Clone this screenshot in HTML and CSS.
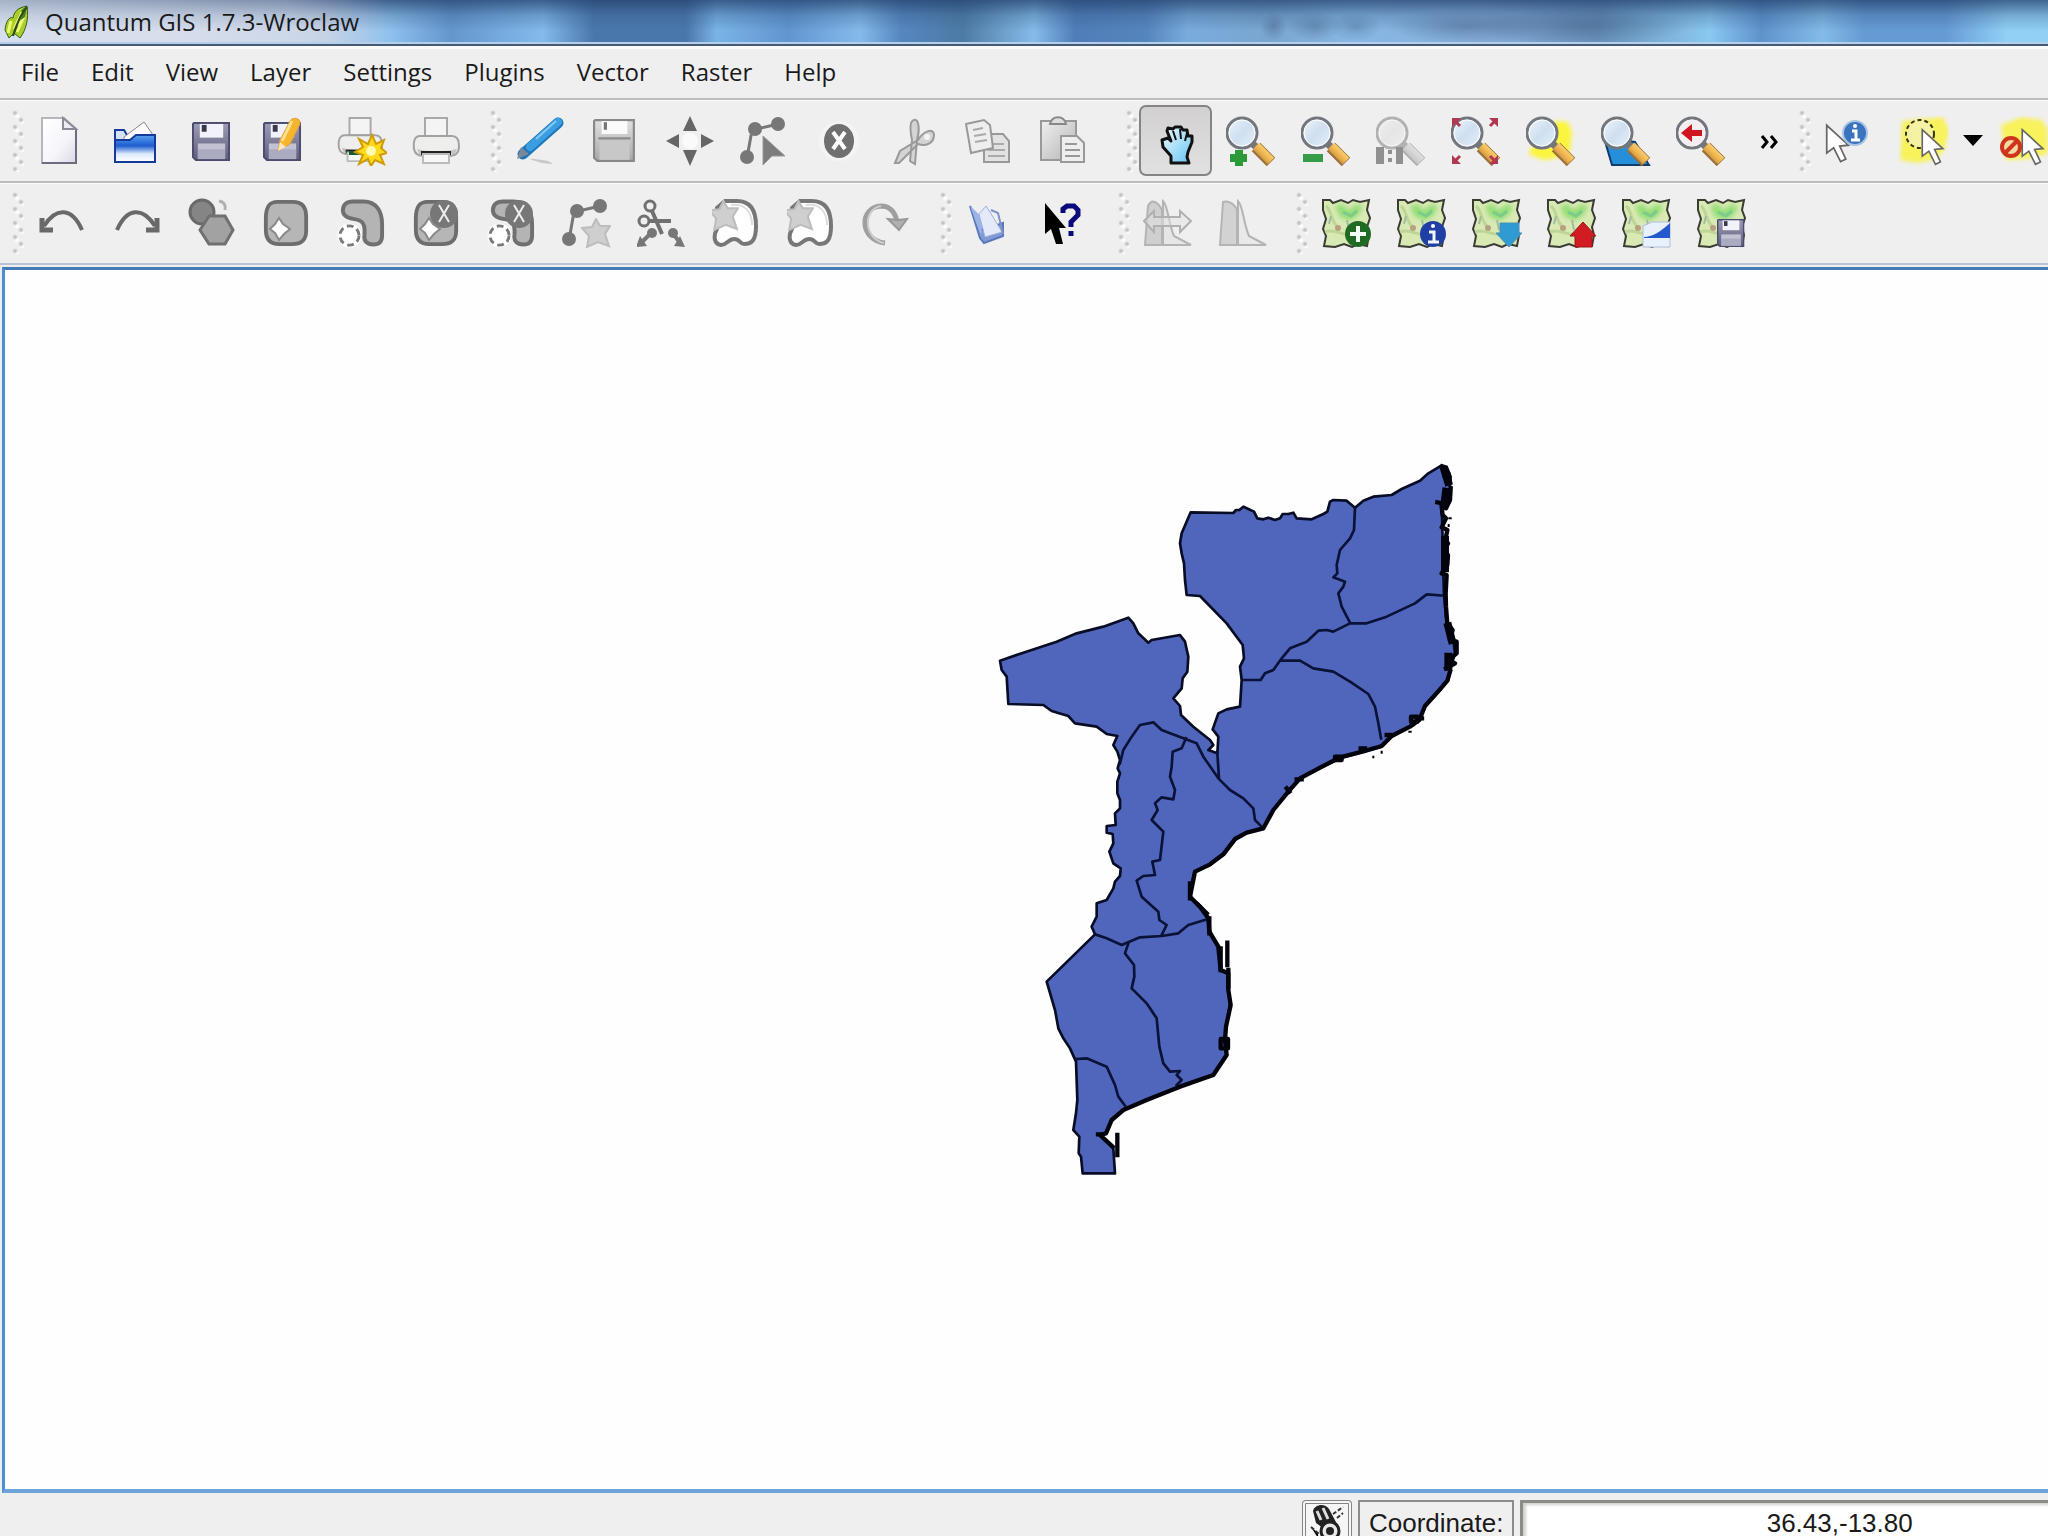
FILE: index.html
```html
<!DOCTYPE html>
<html lang="en">
<head>
<meta charset="utf-8">
<title>Quantum GIS 1.7.3-Wroclaw</title>
<link rel="stylesheet" href="styles.css">
</head>
<body>
<svg class="defs" aria-hidden="true">
  <defs>
    <linearGradient id="gPaper" x1="0" y1="0" x2="1" y2="1"><stop offset="0" stop-color="#fff"/><stop offset=".6" stop-color="#f6f5fb"/><stop offset="1" stop-color="#d9d9e6"/></linearGradient>
    <linearGradient id="gBlue" x1="0" y1="0" x2="0" y2="1"><stop offset="0" stop-color="#5aa2ee"/><stop offset=".4" stop-color="#1d5cd0"/><stop offset=".7" stop-color="#dcebfb"/><stop offset="1" stop-color="#fff"/></linearGradient>
    <linearGradient id="gDisk" x1="0" y1="0" x2="0" y2="1"><stop offset="0" stop-color="#9c9cb6"/><stop offset="1" stop-color="#5e5e7c"/></linearGradient>
    <linearGradient id="gDiskGrey" x1="0" y1="0" x2="0" y2="1"><stop offset="0" stop-color="#e0e0e0"/><stop offset="1" stop-color="#a8a8a8"/></linearGradient>
    <linearGradient id="gHandle" x1="1" y1="0" x2="0" y2="1"><stop offset="0" stop-color="#ffe9a0"/><stop offset=".5" stop-color="#f2b850"/><stop offset="1" stop-color="#a8743a"/></linearGradient>
    <linearGradient id="gLens" x1="0" y1="0" x2="1" y2="1"><stop offset="0" stop-color="#eef5fc"/><stop offset=".5" stop-color="#cfdff0"/><stop offset="1" stop-color="#e6f1fb"/></linearGradient>
    <linearGradient id="gHand" x1="0" y1="0" x2="1" y2="1"><stop offset="0" stop-color="#f2fbff"/><stop offset="1" stop-color="#62c4f4"/></linearGradient>
    <linearGradient id="gGrey" x1="0" y1="0" x2="1" y2="1"><stop offset="0" stop-color="#f0f0f0"/><stop offset="1" stop-color="#b4b4b4"/></linearGradient>
    <filter id="soft"><feGaussianBlur stdDeviation="2"/></filter>
    <symbol id="disk" viewBox="0 0 40 40">
      <path d="M2 1H38V39H4L1 36V2Z" fill="url(#gDisk)" stroke="#4c4c70" stroke-width="2"/>
      <path d="M8 2H32V16H8Z" fill="#f2f2fa"/><path d="M10 3H15V10H10Z" fill="#39394e"/>
      <path d="M6 22H34V38H6Z" fill="#c2c2d2"/><path d="M6 28H34V38H6Z" fill="#aaaac0"/>
    </symbol>
    <symbol id="diskGrey" viewBox="0 0 40 40">
      <path d="M2 1H38V39H4L1 36V2Z" fill="url(#gDiskGrey)" stroke="#888" stroke-width="2"/>
      <path d="M8 2H32V14H8Z" fill="#fbfbfb"/><path d="M10 3H13V10H10Z" fill="#777"/>
      <path d="M6 20H34V38H6Z" fill="#c8c8c8"/><path d="M5 18H35" stroke="#8c8c8c" stroke-width="2"/>
    </symbol>
    <symbol id="lens" viewBox="0 0 50 50">
      <path d="M26 27L31 32" stroke="#777" stroke-width="7"/>
      <path d="M30 31L45 46" stroke="#9b703a" stroke-width="12"/>
      <path d="M30 30L45 45" stroke="url(#gHandle)" stroke-width="9"/>
      <circle cx="16" cy="17" r="15" fill="url(#gLens)" stroke="#73767c" stroke-width="3"/>
      <circle cx="16" cy="17" r="13" fill="none" stroke="#fff" stroke-width="1"/>
    </symbol>
    <symbol id="printer" viewBox="0 0 50 50">
      <path d="M13 2H35V20H13Z" fill="#f4f4f4" stroke="#a8a8a8" stroke-width="2"/>
      <path d="M8 20C2 20 1 27 2 33C3 39 8 40 12 40H37C45 40 47 36 47 30C47 24 45 20 40 20Z" fill="#eeeeec" stroke="#a2a2a2" stroke-width="2"/>
      <path d="M5 33C15 36 34 36 45 33L43 38H7Z" fill="#c4c4c0"/>
      <path d="M9 37H39" stroke="#222" stroke-width="4"/>
      <path d="M11 38H37V47H11Z" fill="#f7f7f7" stroke="#bbb" stroke-width="2"/>
    </symbol>
    <symbol id="osm" viewBox="0 0 50 50">
      <path d="M2 2L9 2 12 5 20 2 27 5 32 2 39 4 48 2 46 12 49 20 46 29 48 37 46 48 37 46 31 49 23 46 14 49 3 48 5 38 2 31 5 21 2 12Z" fill="#d9e9b4" stroke="#3a3c34" stroke-width="2"/>
      <path d="M5 8C12 14 9 24 18 30M4 34C14 30 20 38 30 36" fill="none" stroke="#bdd596" stroke-width="3"/>
      <path d="M14 8L22 6 27 12 36 6 42 9 37 18 28 23 18 18Z" fill="#96de78" filter="url(#soft)"/>
      <path d="M22 14L30 18 36 13" fill="none" stroke="#7acb8c" stroke-width="3"/>
      <path d="M26 22L28 32M10 18L8 26" stroke="#a0bca4" stroke-width="2"/>
      <circle cx="17" cy="30" r="3" fill="#b9a083"/>
    </symbol>
    <symbol id="blob" viewBox="0 0 50 50">
      <path d="M16 3H32C42 3 46 9 46 18V33C46 43 41 47 31 47H18C8 47 4 41 4 32V20C4 9 7 3 16 3Z" fill="#b6b6b6" stroke="#6d6d6d" stroke-width="4"/>
    </symbol>
    <symbol id="bean" viewBox="0 0 50 50">
      <path d="M16 3H27C40 3 46 13 46 26V38C46 44 43 47 37 47C31 47 27 44 28 37C29 26 26 22 18 21C9 20 6 17 6 12C6 6 10 3 16 3Z" fill="#b4b4b4" stroke="#707070" stroke-width="4"/>
    </symbol>
    <symbol id="ring" viewBox="0 0 26 26">
      <circle cx="13" cy="13" r="10" fill="#fff" stroke="#fff" stroke-width="5"/>
      <circle cx="13" cy="13" r="10" fill="#fff" stroke="#7a7a7a" stroke-width="3" stroke-dasharray="7 4"/>
    </symbol>
    <symbol id="feature" viewBox="0 0 50 50">
      <path d="M7 42L12 14L38 8" fill="none" stroke="#777" stroke-width="3" stroke-dasharray="24 3"/>
      <circle cx="7" cy="41" r="7" fill="#777"/><circle cx="15" cy="13" r="7" fill="#777"/><circle cx="38" cy="8" r="7" fill="#777"/>
    </symbol>
    <symbol id="star" viewBox="0 0 30 30">
      <path d="M15 1L19 8 29 8 24 16 28 28 17 24 6 29 8 18 1 10 11 9Z" fill="#cfcfcf" stroke="#bdbdbd" stroke-width="2"/>
    </symbol>
    <symbol id="merge" viewBox="0 0 50 50">
      <path d="M14 3H26C40 3 45 13 45 28C45 42 41 46 33 46C29 46 29 41 23 41C17 41 16 47 10 47C3 46 2 38 6 31V10Z" fill="#fff" stroke="#777" stroke-width="4"/>
      <path d="M20 7C34 5 41 14 41 27" fill="none" stroke="#ddd" stroke-width="2"/>
      <use href="#star" x="-3" y="2" width="31" height="31"/>
    </symbol>
    <symbol id="arrow" viewBox="0 0 30 46">
      <path d="M2 2L2 34 10 28 18 44 24 41 17 26 27 25Z" fill="#fff" stroke="#666" stroke-width="2"/>
    </symbol>
  </defs>
</svg>

<header class="titlebar">
  <svg class="titlebar__icon" viewBox="0 0 26 34" aria-hidden="true">
    <path d="M23 1C12 3 10 8 9 13C5 11 2 17 1 25L5 33L10 28L16 33C22 25 25 14 23 1Z" fill="#a8cf2c" stroke="#3d5d1c" stroke-width="1"/>
    <path d="M23 1C14 6 13 14 10 28C16 24 22 14 23 1Z" fill="#4d7b25"/>
    <path d="M18 7L12 20L18 16L13 27M7 16L4 28" fill="none" stroke="#effa72" stroke-width="3"/>
    <path d="M23 2C17 8 13 18 9 31" fill="none" stroke="#2c4a18" stroke-width="2"/>
  </svg>
  <h1 class="titlebar__text">Quantum GIS 1.7.3-Wroclaw</h1>
</header>

<nav class="menubar" aria-label="Main menu">
  <button class="menubar__item">File</button>
  <button class="menubar__item">Edit</button>
  <button class="menubar__item">View</button>
  <button class="menubar__item">Layer</button>
  <button class="menubar__item">Settings</button>
  <button class="menubar__item">Plugins</button>
  <button class="menubar__item">Vector</button>
  <button class="menubar__item">Raster</button>
  <button class="menubar__item">Help</button>
</nav>

<div class="toolrow">
  <div class="toolbar" role="toolbar" aria-label="File">
    <span class="grip"></span>
    <button class="tool" aria-label="New project"><svg class="icon" viewBox="0 0 50 50"><path d="M5 2H27L39 13V47H5Z" fill="url(#gPaper)" stroke="#b5b5bf" stroke-width="2"/><path d="M39 13V47H5" fill="none" stroke="#6c6c80" stroke-width="2"/><path d="M26 2V13H39Z" fill="#ececf4" stroke="#8b8b98" stroke-width="2"/></svg></button>
    <button class="tool" aria-label="Open project"><svg class="icon" viewBox="0 0 50 50"><path d="M3 46V14H12L15 19H42V46Z" fill="#d4e2f5" stroke="#143a9c" stroke-width="2"/><path d="M12 21L32 6L41 19V26H12Z" fill="#fafaff" stroke="#888" stroke-width="1"/><path d="M3 46V24H18L24 19H43V46Z" fill="url(#gBlue)" stroke="#143a9c" stroke-width="2"/></svg></button>
    <button class="tool" aria-label="Save project"><svg class="icon" viewBox="0 0 50 50"><use href="#disk" x="5" y="6" width="39" height="39"/></svg></button>
    <button class="tool" aria-label="Save project as"><svg class="icon" viewBox="0 0 50 50"><use href="#disk" x="1" y="6" width="39" height="39"/><path d="M16 35L18 24L28 5C30 1 39 1 38 8L28 28Z" fill="#f5b52c" stroke="#e0a040" stroke-width="1"/><path d="M20 25L30 5" stroke="#ffe08a" stroke-width="3"/><path d="M16 35L18 26L24 31Z" fill="#ffe4c0"/></svg></button>
    <button class="tool" aria-label="New print composer"><svg class="icon" viewBox="0 0 50 50"><use href="#printer" width="48" height="48"/><path d="M12 37H26" stroke="#155a38" stroke-width="4"/><path d="M35 19L39 28 47 24 44 32 50 37 43 39 47 48 38 44 34 50 31 43 22 48 26 39 18 36 26 31 22 23 31 28Z" fill="#ffd91c" stroke="#cf9c08" stroke-width="2"/><circle cx="34" cy="35" r="5" fill="#fffbb0"/></svg></button>
    <button class="tool" aria-label="Composer manager"><svg class="icon" viewBox="0 0 50 50"><use href="#printer" width="50" height="50"/></svg></button>
  </div>
  <div class="toolbar toolbar--edit" role="toolbar" aria-label="Digitizing">
    <span class="grip"></span>
    <button class="tool" aria-label="Toggle editing"><svg class="icon" viewBox="0 0 50 50"><path d="M12 42C22 44 34 43 38 48C28 48 20 45 12 42Z" fill="#c8c8c8"/><path d="M8 38L43 7" stroke="#1d77b8" stroke-width="11" stroke-linecap="round"/><path d="M15 31L43 6" stroke="#3b9ee2" stroke-width="8" stroke-linecap="round"/><path d="M21 23L41 5" stroke="#86c8f4" stroke-width="2"/><path d="M2 43L6 31L14 38Z" fill="#7c8796"/></svg></button>
    <button class="tool" aria-label="Save edits"><svg class="icon" viewBox="0 0 50 50"><use href="#diskGrey" x="3" y="3" width="43" height="43"/></svg></button>
    <button class="tool" aria-label="Move feature"><svg class="icon" viewBox="0 0 50 50"><path d="M25 0L32 15H18ZM25 50L18 34H32ZM1 25L14 18V32ZM49 25L36 18V32Z" fill="#666"/><circle cx="25" cy="25" r="8" fill="#fafafa"/></svg></button>
    <button class="tool" aria-label="Node tool"><svg class="icon" viewBox="0 0 50 50"><use href="#feature" width="50" height="50"/><path d="M23 20V49L32 40H45Z" fill="#7c7c7c" stroke="#999" stroke-width="1"/></svg></button>
    <button class="tool" aria-label="Delete selected"><svg class="icon" viewBox="0 0 50 50"><circle cx="24" cy="25" r="20" fill="#f4f4f4"/><ellipse cx="24" cy="25" rx="15" ry="17" fill="#707070"/><path d="M18 16L30 33M30 16L18 33" stroke="#fff" stroke-width="4"/></svg></button>
    <button class="tool" aria-label="Cut features"><svg class="icon" viewBox="0 0 50 50"><path d="M24 4C29 2 30 14 27 24L25 48L20 45L22 24C20 14 19 5 24 4ZM5 47L10 35L28 24C34 14 44 12 44 19C44 27 36 31 28 28L9 47Z" fill="#d4d4d4" stroke="#9a9a9a" stroke-width="2"/><circle cx="37" cy="21" r="3" fill="#f4f4f4"/></svg></button>
    <button class="tool" aria-label="Copy features"><svg class="icon" viewBox="0 0 50 50"><path d="M19 18H38L44 25V46H19Z" fill="#e2e2e2" stroke="#999" stroke-width="2"/><path d="M23 28H39M23 34H40M23 40H40" stroke="#aaa" stroke-width="2"/><path d="M1 8L19 4L25 9L28 32L6 37Z" fill="#eee" stroke="#999" stroke-width="2"/><path d="M8 14L18 12M9 20L21 18M10 26L22 24" stroke="#aaa" stroke-width="2"/></svg></button>
    <button class="tool" aria-label="Paste features"><svg class="icon" viewBox="0 0 50 50"><path d="M1 5H36V44H1Z" fill="url(#gGrey)" stroke="#999" stroke-width="2"/><path d="M10 8C12 -1 24 -1 26 8Z" fill="#ddd" stroke="#888" stroke-width="2"/><path d="M21 20H37L44 27V46H21Z" fill="#eee" stroke="#999" stroke-width="2"/><path d="M25 28H37M25 34H40M25 40H40" stroke="#999" stroke-width="2"/></svg></button>
  </div>
  <div class="toolbar toolbar--nav" role="toolbar" aria-label="Map navigation">
    <span class="grip"></span>
    <button class="tool tool--active" aria-label="Pan map" aria-pressed="true"><svg class="icon" viewBox="0 0 50 50"><path d="M20 47V40L12 31L11 24L17 22L20 25L16 15L17 12L22 13L24 11L30 11L32 14L36 14L37 20L41 20L41 26L37 36L36 41L38 47Z" fill="url(#gHand)" stroke="#111" stroke-width="3" stroke-linejoin="round"/><path d="M22 15L25 24M29 13L30 23M36 17L34 25" stroke="#111" stroke-width="2"/></svg></button>
    <button class="tool" aria-label="Zoom in"><svg class="icon" viewBox="0 0 50 50"><use href="#lens" width="50" height="50"/><path d="M9 34H17V38H21V46H17V50H9V46H4V38H9Z" fill="#2c9a38"/></svg></button>
    <button class="tool" aria-label="Zoom out"><svg class="icon" viewBox="0 0 50 50"><use href="#lens" width="50" height="50"/><path d="M2 38H22V46H2Z" fill="#369c48"/></svg></button>
    <button class="tool" aria-label="Zoom to native resolution"><svg class="icon icon--grey" viewBox="0 0 50 50"><use href="#lens" width="50" height="50"/><path d="M0 31H8V48H0ZM20 31H27V48H20ZM12 34H16V38H12ZM12 42H16V46H12Z" fill="#333"/></svg></button>
    <button class="tool" aria-label="Zoom full"><svg class="icon" viewBox="0 0 50 50"><use href="#lens" width="50" height="50"/><path d="M1 2H10L1 11ZM38 2H47V11ZM1 48V39L10 48ZM47 48H38L47 39Z" fill="#b03850"/><path d="M3 4L9 10M45 4L39 10M3 46L9 40M45 46L39 40" stroke="#b03850" stroke-width="3"/></svg></button>
    <button class="tool" aria-label="Zoom to selection"><svg class="icon" viewBox="0 0 50 50"><path d="M2 38L8 28L28 5L42 6L46 16L44 36L30 42L18 44Z" fill="#fbf53c" filter="url(#soft)"/><use href="#lens" width="50" height="50"/></svg></button>
    <button class="tool" aria-label="Zoom to layer"><svg class="icon" viewBox="0 0 50 50"><path d="M3 22L11 49H48L34 26Z" fill="#268fdc" stroke="#103c68" stroke-width="2"/><use href="#lens" width="50" height="50"/></svg></button>
    <button class="tool" aria-label="Zoom last"><svg class="icon" viewBox="0 0 50 50"><use href="#lens" width="50" height="50"/><circle cx="16" cy="17" r="13" fill="#f5eef0"/><path d="M5 17L16 8V14H26V20H16V26Z" fill="#cf1620"/></svg></button>
    <button class="tool tool--more" aria-label="More tools"><svg class="icon" viewBox="0 0 50 50"><path d="M18 20L23 26L18 32M27 20L32 26L27 32" fill="none" stroke="#000" stroke-width="3"/></svg></button>
  </div>
  <div class="toolbar" role="toolbar" aria-label="Attributes">
    <span class="grip"></span>
    <button class="tool" aria-label="Identify features"><svg class="icon" viewBox="0 0 50 50"><use href="#arrow" x="1" y="7" width="26" height="41"/><circle cx="31" cy="17" r="12" fill="#3b74be" stroke="#a8c4e4" stroke-width="2"/><path d="M28 15H32V23M27 24H36" fill="none" stroke="#fff" stroke-width="3"/><circle cx="31" cy="10" r="2" fill="#fff"/></svg></button>
    <button class="tool" aria-label="Select features"><svg class="icon" viewBox="0 0 50 50"><path d="M3 5L24 3L44 1L50 14L46 32L38 43L18 47L1 44Z" fill="#f8f25c" filter="url(#soft)"/><circle cx="21" cy="18" r="14" fill="#f6f2a4" stroke="#33330f" stroke-width="2" stroke-dasharray="4 3"/><use href="#arrow" x="21" y="12" width="26" height="38"/></svg></button>
    <button class="tool tool--drop" aria-label="Selection modes"><svg class="icon" viewBox="0 0 50 50"><path d="M15 19H35L25 30Z" fill="#000"/></svg></button>
    <button class="tool" aria-label="Deselect features"><svg class="icon" viewBox="0 0 50 50"><path d="M3 9L24 1L44 4L50 14L50 38L28 43L8 44Z" fill="#f8f25c" filter="url(#soft)"/><use href="#arrow" x="22" y="12" width="26" height="38"/><circle cx="13" cy="31" r="9" fill="#f6d8a0" stroke="#cf341c" stroke-width="4"/><path d="M7 37L19 25" stroke="#cf341c" stroke-width="4"/></svg></button>
  </div>
</div>

<div class="toolrow toolrow--last">
  <div class="toolbar" role="toolbar" aria-label="Advanced digitizing">
    <span class="grip"></span>
    <button class="tool" aria-label="Undo"><svg class="icon" viewBox="0 0 50 50"><path d="M45 32C35 9 19 9 7 28" fill="none" stroke="#696969" stroke-width="4"/><path d="M5 20V32H16" fill="none" stroke="#696969" stroke-width="5"/></svg></button>
    <button class="tool" aria-label="Redo"><svg class="icon" viewBox="0 0 50 50"><path d="M5 32C15 9 31 9 43 28" fill="none" stroke="#696969" stroke-width="4"/><path d="M45 20V32H34" fill="none" stroke="#696969" stroke-width="5"/></svg></button>
    <button class="tool" aria-label="Simplify feature"><svg class="icon" viewBox="0 0 50 50"><circle cx="15" cy="14" r="12" fill="#858585" stroke="#696969" stroke-width="3"/><path d="M22 18H38L46 32L38 46H22L13 32Z" fill="#a2a2a2" stroke="#707070" stroke-width="3"/><path d="M32 3C37 4 39 7 38 12" fill="none" stroke="#b0b0b0" stroke-width="3"/></svg></button>
    <button class="tool" aria-label="Add ring"><svg class="icon" viewBox="0 0 50 50"><use href="#blob" width="48" height="50"/><path d="M17 20L21 26L28 31L22 36L17 42L13 35L8 31L13 26Z" fill="#fff" stroke="#8a8a8a" stroke-width="2"/></svg></button>
    <button class="tool" aria-label="Add part"><svg class="icon" viewBox="0 0 50 50"><use href="#bean" width="49" height="50"/><use href="#ring" x="0" y="25" width="25" height="25"/></svg></button>
    <button class="tool" aria-label="Delete ring"><svg class="icon" viewBox="0 0 50 50"><use href="#blob" width="48" height="50"/><circle cx="32" cy="16" r="14" fill="#777"/><path d="M17 20L21 26L28 31L22 36L17 42L13 35L8 31L13 26Z" fill="#fff" stroke="#8a8a8a" stroke-width="2"/><path d="M27 7L37 24M37 7L27 24" stroke="#eee" stroke-width="2"/></svg></button>
    <button class="tool" aria-label="Delete part"><svg class="icon" viewBox="0 0 50 50"><use href="#bean" width="49" height="50"/><circle cx="32" cy="16" r="14" fill="#777"/><path d="M27 7L37 24M37 7L27 24" stroke="#eee" stroke-width="2"/><use href="#ring" x="0" y="25" width="25" height="25"/></svg></button>
    <button class="tool" aria-label="Reshape features"><svg class="icon" viewBox="0 0 50 50"><use href="#feature" width="50" height="50"/><use href="#star" x="19" y="20" width="30" height="30"/></svg></button>
    <button class="tool" aria-label="Split features"><svg class="icon" viewBox="0 0 50 50"><circle cx="13" cy="8" r="5" fill="none" stroke="#707070" stroke-width="3"/><circle cx="7" cy="23" r="5" fill="none" stroke="#707070" stroke-width="3"/><path d="M15 13L25 36M12 23H34" stroke="#707070" stroke-width="4"/><path d="M3 46L15 34M34 33L44 46" stroke="#777" stroke-width="4"/><circle cx="15" cy="35" r="5" fill="#777"/><circle cx="36" cy="35" r="5" fill="#777"/><path d="M-1 49L3 38L10 48ZM37 48L43 38L48 49Z" fill="#777"/></svg></button>
    <button class="tool" aria-label="Merge selected features"><svg class="icon" viewBox="0 0 50 50"><use href="#merge" x="-1" width="50" height="50"/></svg></button>
    <button class="tool" aria-label="Merge attributes"><svg class="icon" viewBox="0 0 50 50"><use href="#merge" x="-1" width="50" height="50"/></svg></button>
    <button class="tool" aria-label="Rotate point symbols"><svg class="icon" viewBox="0 0 50 50"><path d="M23 45C-3 42 -3 9 19 8C29 8 33 15 35 23" fill="none" stroke="#9f9f9f" stroke-width="5"/><path d="M22 45C1 40 1 11 19 8" fill="none" stroke="#ccc" stroke-width="2"/><path d="M26 21L37 32L45 21L36 22Z" fill="#b0b0b0" stroke="#989898" stroke-width="2"/></svg></button>
  </div>
  <div class="toolbar" role="toolbar" aria-label="Help">
    <span class="grip"></span>
    <button class="tool" aria-label="Help contents"><svg class="icon" viewBox="0 0 50 50"><path d="M5 8L18 32L38 25V38L19 45L15 40Z" fill="#7f9bd6" stroke="#5b78bd" stroke-width="2"/><path d="M5 8L18 20L16 38Z" fill="#9bb3e6"/><path d="M14 16L21 8L25 14L37 34L20 39Z" fill="#e4eafa" stroke="#9eb0dc" stroke-width="1"/><path d="M26 12L33 15L38 36" fill="none" stroke="#7d93c8" stroke-width="2"/></svg></button>
    <button class="tool" aria-label="What's this?"><svg class="icon" viewBox="0 0 50 50"><path d="M5 5V36L11 31L16 46H23L19 30H26Z" fill="#000"/><path d="M23 15V11L27 8H34L38 12V17L31 24V29M31 33V38" fill="none" stroke="#0a0a7c" stroke-width="5"/></svg></button>
  </div>
  <div class="toolbar" role="toolbar" aria-label="Raster">
    <span class="grip"></span>
    <button class="tool" aria-label="Local histogram stretch"><svg class="icon" viewBox="0 0 50 50"><path d="M2 47L5 8C9 0 15 4 19 12V47Z" fill="#cfcfcf" stroke="#b4b4b4" stroke-width="2"/><path d="M20 47V3C25 7 25 24 31 38L48 47Z" fill="#e6e6e6" stroke="#b4b4b4" stroke-width="2"/><path d="M1 23L11 13V19H37V13L48 23L37 34V28H11V34Z" fill="#e4e4e4" fill-opacity=".5" stroke="#b0b0b0" stroke-width="2"/></svg></button>
    <button class="tool" aria-label="Full histogram stretch"><svg class="icon" viewBox="0 0 50 50"><path d="M2 47L5 4C11 2 15 5 19 11V47Z" fill="#d2d2d2" stroke="#b4b4b4" stroke-width="2"/><path d="M20 47V3C25 7 25 24 31 38L48 47Z" fill="#e9e9e9" stroke="#b4b4b4" stroke-width="2"/></svg></button>
  </div>
  <div class="toolbar" role="toolbar" aria-label="OpenStreetMap">
    <span class="grip"></span>
    <button class="tool" aria-label="Add map data"><svg class="icon icon--map" viewBox="0 0 52 50"><use href="#osm" x="1" width="50" height="50"/><circle cx="38" cy="36" r="13" fill="#1f6b24"/><path d="M38 28V44M30 36H46" stroke="#f4fff4" stroke-width="4"/></svg></button>
    <button class="tool" aria-label="Map feature information"><svg class="icon icon--map" viewBox="0 0 52 50"><use href="#osm" x="1" width="50" height="50"/><circle cx="38" cy="36" r="13" fill="#1f3fa4"/><path d="M34 34H39V43M33 44H44" fill="none" stroke="#f4f4ff" stroke-width="3"/><circle cx="38" cy="28" r="2" fill="#fff"/></svg></button>
    <button class="tool" aria-label="Download map data"><svg class="icon icon--map" viewBox="0 0 52 50"><use href="#osm" x="1" width="50" height="50"/><path d="M30 25H49V35H52L39 49L26 35H30Z" fill="#2e9bd2" stroke="#4a8fb8" stroke-width="1"/></svg></button>
    <button class="tool" aria-label="Upload map data"><svg class="icon icon--map" viewBox="0 0 52 50"><use href="#osm" x="1" width="50" height="50"/><path d="M38 24L51 38H47V49H30V38H25Z" fill="#d21c24" stroke="#9c1414" stroke-width="1"/></svg></button>
    <button class="tool" aria-label="Import map data"><svg class="icon icon--map" viewBox="0 0 52 50"><use href="#osm" x="1" width="50" height="50"/><path d="M23 28L32 24H50V49H23Z" fill="#e8f0fc" stroke="#b0bcdc" stroke-width="1"/><path d="M24 39C32 39 40 34 50 25V40H24Z" fill="#2459ce"/></svg></button>
    <button class="tool" aria-label="Save map data"><svg class="icon icon--map" viewBox="0 0 52 50"><use href="#osm" x="1" width="50" height="50"/><use href="#disk" x="22" y="21" width="28" height="28"/></svg></button>
  </div>
</div>

<main class="canvas">
  <svg class="map" viewBox="0 0 1500 2280" role="img" aria-label="Provinces of Mozambique" stroke-linejoin="round" stroke-linecap="square">
    <path class="map__land" d="M632 217L760 219 768 210 778 210 790 200 805 207 822 215 832 235 850 238 865 233 885 240 900 235 908 222 925 222 940 218 950 235 995 238 1030 222 1042 215 1050 185 1060 180 1100 182 1125 203 1150 182 1180 170 1235 165 1265 147 1320 122 1345 100 1375 82 1385 76 1400 80 1412 110 1408 170 1385 190 1388 300 1390 400 1392 465 1400 550 1420 600 1425 640 1410 690 1405 720 1380 750 1335 800 1315 840 1290 860 1235 890 1205 920 1150 935 1080 955 1020 985 960 1015 925 1055 880 1110 850 1165 800 1178 770 1195 730 1245 690 1275 645 1295 635 1330 630 1370 660 1400 685 1435 690 1475 715 1520 725 1590 745 1600 745 1650 750 1695 738 1760 735 1800 740 1845 700 1905 600 1940 500 1980 430 2010 395 2040 378 2080 360 2085 400 2125 405 2200 308 2200 303 2150 296 2140 298 2090 280 2070 288 2020 292 1980 288 1865 270 1825 250 1795 235 1765 225 1710 200 1625 345 1483 335 1460 350 1430 350 1390 380 1380 400 1345 405 1325 420 1308 422 1285 400 1270 388 1235 400 1210 398 1182 380 1178 380 1158 407 1155 405 1120 420 1105 420 1080 412 1060 412 1025 420 1000 413 985 420 960 412 935 400 915 412 888 380 882 350 860 285 850 265 828 215 813 190 795 85 792 80 710 65 690 60 662 130 638 230 605 290 580 370 560 445 533 460 550 475 580 505 608 515 600 600 585 615 605 625 650 622 695 608 715 605 745 580 775 600 798 603 825 640 860 690 900 700 915 685 930 712 940 715 890 698 868 715 820 740 808 780 800 785 720 780 680 792 655 788 615 740 550 660 468 620 465 615 420 612 370 605 340 600 310 605 280Z"/>
    <g class="map__border">
      <path d="M1125 203L1122 270 1110 295 1080 330 1070 375 1072 400 1060 412 1095 425 1090 440 1075 460 1085 500 1110 548"/>
      <path d="M788 720L842 720 855 700 880 690 905 655 930 625 980 605 1015 572 1040 570 1060 575 1110 550 1160 550 1220 530 1305 490 1340 463 1392 467"/>
      <path d="M905 662L960 662 1000 685 1060 695 1110 725 1165 762 1185 800 1195 850 1203 895"/>
      <path d="M420 970L430 930 455 890 480 855 520 847 545 870 590 887 650 910 670 950 715 1015 750 1050 790 1075 820 1105 825 1140 850 1165M712 940L717 1015"/>
      <path d="M618 895L605 925 578 935 575 980 570 1010 585 1050 580 1078 545 1072 525 1090 533 1110 515 1140 550 1175 540 1260 517 1265 525 1305 490 1308 470 1322 485 1370 535 1415 538 1440 560 1455 545 1485"/>
      <path d="M345 1483L380 1495 425 1515 480 1492 545 1488 595 1480 625 1455 680 1438"/>
      <path d="M445 1510L435 1540 462 1575 463 1610 455 1645 500 1690 530 1735 538 1820 550 1870 570 1895 600 1893 590 1905 605 1920 590 1935"/>
      <path d="M288 1857L320 1855 380 1880 405 1935 415 1970 435 1997"/>
    </g>
    <g class="map__coast">
      <path d="M1385 80L1405 100 1408 125 1395 110M1412 145L1410 180 1398 205 1388 190 1372 187M1385 200L1388 225 1398 235 1385 262 1402 270 1396 300 1404 310 1390 335 1404 345 1402 375 1385 400 1400 405 1397 460 1398 500 1402 550 1418 570 1410 600 1430 605 1430 640 1405 660 1425 670 1398 685"/>
      <path class="map__coast--wide" d="M1394 92L1404 125M1398 155L1394 188M1395 300V385M1405 560L1415 600M1405 650V680"/>
      <path d="M1410 695L1402 722 1380 748 1335 798 1318 840 1290 860 1235 888 1205 918 1150 934 1080 952 1020 983 960 1015 925 1055 880 1110 850 1165 800 1178 765 1197 730 1243 690 1273 645 1295 638 1330 630 1370 660 1400 685 1435 688 1475 715 1520 722 1590 745 1600 745 1650 752 1695 738 1760 735 1800 740 1845 700 1905 600 1940 500 1980 430 2010 395 2040 378 2080 360 2085 398 2120"/>
      <path d="M1293 830H1312V845H1293ZM1322 835H1326M1065 950H1085V960H1065ZM1220 885H1232M1142 925H1155M950 1018H965M722 1797H744V1825H722ZM655 1395L680 1420M630 1330V1375M742 1508V1575M722 1525V1590M412 2085V2145M688 1435V1480M745 1590V1640M354 2083H368M920 1045L928 1055"/>
      <path class="map__coast--thin" d="M1288 875H1292M1205 935V938M1180 950V952M1408 235H1412M1406 255V258"/>
    </g>
  </svg>
</main>

<footer class="statusbar">
  <button class="statusbar__toggle" aria-label="Toggle extents and mouse position"><svg class="statusbar__icon" viewBox="0 0 36 34" aria-hidden="true"><path d="M4 7C6 0 16 -1 20 5L28 20L17 26L7 19Z" fill="#222"/><path d="M8 7L12 16M14 4L19 15" stroke="#ddd" stroke-width="3"/><circle cx="21" cy="27" r="9" fill="#e8e8e8" stroke="#222" stroke-width="3"/><circle cx="21" cy="27" r="4" fill="#222"/><path d="M2 23L9 29V34M24 10L34 3M28 14L34 9" stroke="#333" stroke-width="2" stroke-dasharray="4 2"/></svg></button>
  <label class="statusbar__label" for="coordinate">Coordinate:</label>
  <input class="statusbar__field" id="coordinate" type="text" value="36.43,-13.80">
</footer>
</body>
</html>
```
FILE: styles.css
```css
* {
  box-sizing: border-box;
}

body {
  margin: 0;
  height: 100vh;
  display: flex;
  flex-direction: column;
  overflow: hidden;
  background: #f0eff0;
  color: #1a1a1a;
  font-family: "Open Sans", "Noto Sans", sans-serif;
  font-size: 24px;
}

button {
  margin: 0;
  padding: 0;
  border: 0;
  background: none;
  color: inherit;
  font: inherit;
}

.defs {
  position: absolute;
  width: 0;
  height: 0;
}

/* Title bar */

.titlebar {
  flex: none;
  display: flex;
  align-items: center;
  gap: 15px;
  height: 46px;
  padding: 0 4px;
  border-bottom: 2px solid #465a76;
  box-shadow: inset 0 -2px 0 #b4cfea;
  background:
    radial-gradient(14px 14px at 62.2% 60%, rgba(60, 90, 125, .4), transparent),
    radial-gradient(28px 15px at 64.2% 60%, rgba(60, 90, 125, .4), transparent),
    radial-gradient(26px 15px at 66.2% 60%, rgba(60, 90, 125, .35), transparent),
    radial-gradient(80px 17px at 71.6% 60%, rgba(60, 90, 125, .45), transparent),
    radial-gradient(110px 18px at 77.2% 60%, rgba(60, 90, 125, .45), transparent),
    linear-gradient(to right, rgba(240, 243, 250, .55), rgba(240, 243, 250, .3) 14%, transparent 19%),
    linear-gradient(rgba(35, 65, 110, .75), rgba(50, 85, 130, .3) 35%, transparent 70%),
    linear-gradient(to right, #b9c6dc 0, #c6cfe2 8%, #bccbe2 16%, #8fc2ee 19%, #6496cc 22%, #82bbec 26.5%, #4a77ab 29%, #4a77ab 33.5%, #7ab4e6 35%, #6095d0 38.5%, #84bbea 42%, #5587bf 44%, #4d7aa5 47%, #85bce8 50.5%, #4f7db8 52.5%, #5585bd 56%, #79acdc 58%, #7aa5d0 62%, #88b8e6 66%, #86aedb 72.5%, #6a93bd 78%, #8ac8f0 83.5%, #5e92cc 86%, #82bce6 89%, #659bd4 91%, #659bd4 95%, #92d0f6 98%);
}

.titlebar__icon {
  width: 26px;
  height: 34px;
}

.titlebar__text {
  margin: 0;
  font-size: 24px;
  font-weight: 400;
  line-height: 44px;
}

/* Menu bar */

.menubar {
  flex: none;
  display: flex;
  gap: 32px;
  height: 54px;
  padding-left: 21px;
  border-bottom: 2px solid #bdbcbd;
  box-shadow: inset 0 3px 0 #fafafa;
}

.menubar__item {
  line-height: 52px;
}

/* Toolbars */

.toolrow {
  flex: none;
  display: flex;
  height: 83px;
  padding-left: 12px;
  overflow: hidden;
  border-bottom: 2px solid #bdbcbd;
  box-shadow: inset 0 1px 0 #fafafa;
}

.toolrow--last {
  height: 82px;
  border-bottom-color: #b9c3d6;
}

.toolbar {
  flex: none;
  display: flex;
  align-items: center;
  margin-right: 16px;
}

.toolbar--edit {
  margin-right: 24px;
}

.toolbar--nav {
  margin-right: 0;
}

.grip {
  width: 12px;
  height: 62px;
  background:
    radial-gradient(circle at 3px 3px, #c4c4c4 1px, transparent 3px) 0 0 / 12px 14px,
    radial-gradient(circle at 9px 10px, #c4c4c4 1px, transparent 3px) 0 0 / 12px 14px,
    radial-gradient(circle at 5px 6px, #fff 1px, transparent 3px) 0 0 / 12px 14px,
    radial-gradient(circle at 10px 12px, #fff 1px, transparent 3px) 0 0 / 12px 14px;
}

.tool {
  flex: none;
  display: flex;
  align-items: center;
  justify-content: center;
  width: 75px;
  height: 71px;
}

.tool--active {
  width: 73px;
  margin: 0 1px;
  border: 2px solid #858585;
  border-radius: 7px;
  background: linear-gradient(#d2d0d0, #e2e1e1);
}

.tool--more {
  width: 61px;
}

.tool--drop {
  width: 24px;
}

.icon {
  flex: none;
  width: 50px;
  height: 50px;
}

.icon--map {
  width: 52px;
}

.icon--grey {
  filter: grayscale(1);
  opacity: .5;
}

/* Map canvas */

.canvas {
  position: relative;
  flex: 1;
  margin: 2px 0 0 2px;
  overflow: hidden;
  border: solid #6fa3dc;
  border-width: 3px 0 4px 3px;
  border-top-color: #3f7db4;
  border-left-color: #4a8fd8;
  background: #fefefe;
}

.map {
  position: absolute;
  left: 975px;
  top: 170px;
  width: 500px;
  height: 760px;
}

.map__land {
  fill: #4f66bc;
  stroke: #080c24;
  stroke-width: 8px;
}

.map__border {
  fill: none;
  stroke: #0a1238;
  stroke-width: 8px;
}

.map__coast {
  fill: none;
  stroke: #02030c;
  stroke-width: 13px;
}

.map__coast--wide {
  stroke-width: 24px;
}

.map__coast--thin {
  stroke-width: 6px;
}

/* Status bar */

.statusbar {
  flex: none;
  display: flex;
  gap: 6px;
  height: 43px;
  padding: 7px 0 0 calc(100% - 746px);
  font-family: "Liberation Sans", Arial, sans-serif;
  font-size: 26px;
  line-height: 24px;
}

.statusbar__toggle {
  flex: none;
  display: flex;
  justify-content: center;
  width: 50px;
  border: 4px double #858585;
  border-bottom: 0;
  border-radius: 4px 4px 0 0;
  background: #f6f6f6;
}

.statusbar__icon {
  width: 36px;
  height: 34px;
}

.statusbar__label {
  flex: none;
  padding: 9px 9px 0;
  border: 2px solid #8c8c8c;
  border-bottom: 0;
}

.statusbar__field {
  flex: 1;
  min-width: 0;
  margin: 0;
  padding: 8px 0 0 108px;
  border: solid #8a8c88;
  border-width: 3px 0 0 3px;
  background: #fff;
  box-shadow: inset 3px 2px 3px #d0d0d0;
  color: inherit;
  font: inherit;
  line-height: 24px;
  text-align: center;
}
```
